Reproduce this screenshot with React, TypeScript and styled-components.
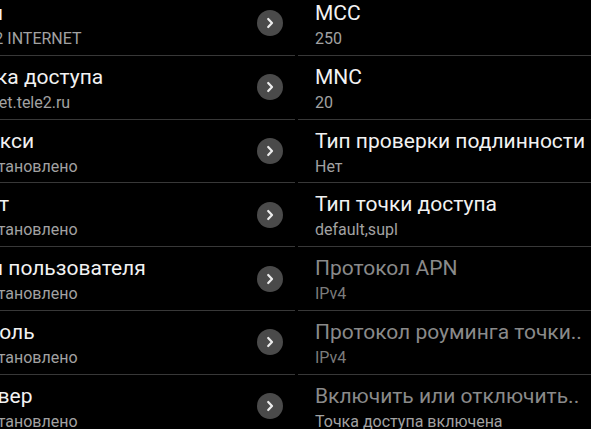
import styled, { createGlobalStyle } from "styled-components";

const GlobalStyle = createGlobalStyle`
  html, body {
    margin: 0;
    padding: 0;
    background: #000;
  }
  body {
    width: 591px;
    height: 429px;
    overflow: hidden;
    font-family: Roboto, "Noto Sans", sans-serif;
  }
`;

type Item = {
  title: string;
  summary: string;
  disabled?: boolean;
  summaryLight?: boolean;
};

const leftItems: Item[] = [
  { title: "Имя", summary: "TELE2 INTERNET" },
  { title: "Точка доступа", summary: "internet.tele2.ru" },
  { title: "Прокси", summary: "Не установлено" },
  { title: "Порт", summary: "Не установлено" },
  { title: "Имя пользователя", summary: "Не установлено" },
  { title: "Пароль", summary: "Не установлено" },
  { title: "Сервер", summary: "Не установлено" },
];

const rightItems: Item[] = [
  { title: "MCC", summary: "250" },
  { title: "MNC", summary: "20" },
  { title: "Тип проверки подлинности", summary: "Нет" },
  { title: "Тип точки доступа", summary: "default,supl" },
  { title: "Протокол APN", summary: "IPv4", disabled: true },
  { title: "Протокол роуминга точки..", summary: "IPv4", disabled: true },
  {
    title: "Включить или отключить..",
    summary: "Точка доступа включена",
    disabled: true,
    summaryLight: true,
  },
];

const Chevron = () => (
  <Circle>
    <svg width="10" height="12" viewBox="0 0 10 12">
      <path
        d="M3.2 2 L7 6 L3.2 10"
        fill="none"
        stroke="#ececec"
        strokeWidth="2.2"
        strokeLinecap="round"
        strokeLinejoin="round"
      />
    </svg>
  </Circle>
);

export default function App() {
  return (
    <>
      <GlobalStyle />
      <Screen>
        <LeftPane>
          {leftItems.map((item) => (
            <Row key={item.title}>
              <Texts>
                <Title>{item.title}</Title>
                <Summary $shift>{item.summary}</Summary>
              </Texts>
              <Chevron />
            </Row>
          ))}
        </LeftPane>
        <RightPane>
          {rightItems.map((item) => (
            <Row key={item.title}>
              <Texts>
                <Title $disabled={item.disabled}>{item.title}</Title>
                <Summary $disabled={item.disabled && !item.summaryLight}>
                  {item.summary}
                </Summary>
              </Texts>
            </Row>
          ))}
        </RightPane>
      </Screen>
    </>
  );
}

const Screen = styled.div`
  display: flex;
  gap: 3px;
  width: 591px;
  height: 429px;
  overflow: hidden;
  background: #000;
`;

const LeftPane = styled.div`
  flex: 0 0 351px;
  margin-left: -56px;
  margin-top: -8px;
  display: flex;
  flex-direction: column;
`;

const RightPane = styled.div`
  flex: 1;
  min-width: 0;
  margin-top: -8px;
  display: flex;
  flex-direction: column;
`;

const Row = styled.div`
  box-sizing: border-box;
  height: 63.8px;
  flex: 0 0 63.8px;
  display: flex;
  align-items: center;
  padding: 0 12px 0 17px;
  border-bottom: 1px solid #383838;
`;

const Texts = styled.div`
  flex: 1;
  min-width: 0;
  display: flex;
  flex-direction: column;
  align-self: flex-start;
  padding-top: 9px;
`;

const Title = styled.div<{ $disabled?: boolean }>`
  font-size: 21px;
  line-height: 24px;
  color: ${(p) => (p.$disabled ? "#8a8a8a" : "#f2f2f2")};
  white-space: nowrap;
`;

const Summary = styled.div<{ $disabled?: boolean; $shift?: boolean }>`
  margin-top: 5px;
  margin-left: ${(p) => (p.$shift ? "-3px" : "0")};
  font-size: 16px;
  line-height: 18px;
  color: ${(p) => (p.$disabled ? "#7c7c7c" : "#a2a2a2")};
  white-space: nowrap;
`;

const Circle = styled.div`
  flex: 0 0 26px;
  width: 26px;
  height: 26px;
  border-radius: 50%;
  background: #4a4a4a;
  display: flex;
  align-items: center;
  justify-content: center;
`;
